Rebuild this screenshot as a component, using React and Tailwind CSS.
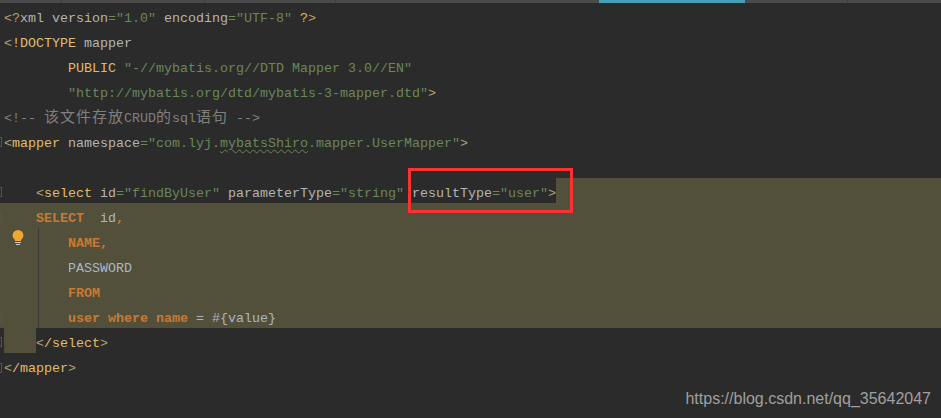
const mono = "font-['Liberation_Mono','Noto_Sans_CJK_SC',monospace]";

const tag = "text-[#e3bb68]";
const bracket = "text-[#b5a06f]";
const attr = "text-[#b4b4b4]";
const str = "text-[#6a8759]";
const kw = "font-bold text-[#cc7832]";
const sql = "text-[#a9b7c6]";
const comment = "text-[#808080]";

// [text, colour] pairs for each line of the editor
const T = (t, c) => ({ t, c });

function Line({ parts = [], lead = false, fill = false, lit = false, children }) {
  return (
    <div className={`flex h-[25px] pl-1 leading-[31px] whitespace-pre ${lit ? "bg-[#52503a]" : ""}`}>
      {lead ? <span className="bg-[#52503a]">{"    "}</span> : null}
      {parts.map((p, i) => (
        <span key={i} className={p.c}>{p.t}</span>
      ))}
      {children}
      {fill ? <span className="flex-1 bg-[#52503a]" /> : null}
    </div>
  );
}

function FoldMark({ className }) {
  return <span className={`absolute left-0 h-[10px] w-[2px] border-y border-r border-[#555] ${className}`} />;
}

export default function App() {
  return (
    <div className={`relative h-[418px] w-[941px] overflow-hidden bg-[#2b2b2b] text-[13.33px] ${mono}`}>
      <div className="flex h-[3px] bg-[#4a4a4a]">
        <div className="w-[62px] border-r border-[#3a3a3a]" />
        <div className="w-[143px] border-r border-[#3a3a3a]" />
        <div className="w-[131px] border-r border-[#3a3a3a]" />
        <div className="w-[263px]" />
        <div className="w-[146px] bg-[#4a9fb8]" />
        <div className="w-[103px] border-r border-[#3a3a3a]" />
        <div className="flex-1" />
      </div>

      <Line parts={[T("<?", bracket), T("xml ", attr), T("version", attr), T('="1.0" ', str), T("encoding", attr), T('="UTF-8" ', str), T("?", tag), T(">", bracket)]} />
      <Line parts={[T("<", bracket), T("!DOCTYPE ", tag), T("mapper", attr)]} />
      <Line parts={[T("        "), T("PUBLIC ", tag), T('"-//mybatis.org//DTD Mapper 3.0//EN"', str)]} />
      <Line parts={[T("        "), T('"http://mybatis.org/dtd/mybatis-3-mapper.dtd"', str), T(">", bracket)]} />
      <div className={`flex h-[25px] pl-1 leading-[31px] whitespace-pre ${comment}`}>
        <span>{"<!-- "}</span>
        <span className="w-[16px] text-[15px]">该</span>
        <span className="w-[16px] text-[15px]">文</span>
        <span className="w-[16px] text-[15px]">件</span>
        <span className="w-[16px] text-[15px]">存</span>
        <span className="w-[16px] text-[15px]">放</span>
        <span>CRUD</span>
        <span className="w-[16px] text-[15px]">的</span>
        <span>sql</span>
        <span className="w-[16px] text-[15px]">语</span>
        <span className="w-[16px] text-[15px]">句</span>
        <span>{" -->"}</span>
      </div>
      <Line>
        <span className={bracket}>{"<"}</span>
        <span className={tag}>mapper </span>
        <span className={attr}>namespace</span>
        <span className={str}>{'="com.lyj.'}</span>
        <span className={`${str} underline decoration-wavy decoration-[#6a8759] decoration-1 underline-offset-2`}>mybatsShiro</span>
        <span className={str}>{'.mapper.UserMapper"'}</span>
        <span className={bracket}>{">"}</span>
      </Line>
      <Line />
      <Line
        fill
        parts={[T("    "), T("<", bracket), T("select ", tag), T("id", attr), T('="findByUser" ', str), T("parameterType", attr), T('="string" ', str), T("resultType", attr), T('="user"', str), T(">", bracket)]}
      />
      <Line lit parts={[T("    "), T("SELECT", kw), T("  "), T("id", sql), T(",", kw)]} />
      <Line lit parts={[T("        "), T("NAME", kw), T(",", kw)]} />
      <Line lit parts={[T("        "), T("PASSWORD", sql)]} />
      <Line lit parts={[T("        "), T("FROM", kw)]} />
      <Line lit parts={[T("        "), T("user where name", kw), T(" = #{value}", sql)]} />
      <Line lead parts={[T("<", bracket), T("/select", tag), T(">", bracket)]} />
      <Line parts={[T("<", bracket), T("/mapper", tag), T(">", bracket)]} />

      <FoldMark className="top-[137px]" />
      <FoldMark className="top-[187px]" />
      <FoldMark className="top-[212px]" />
      <FoldMark className="top-[313px]" />
      <FoldMark className="top-[337px]" />
      <FoldMark className="top-[363px]" />

      {/* indent guide */}
      <div className="absolute top-[228px] left-[38px] h-[100px] w-px bg-[#3a3a36]" />

      {/* intention bulb */}
      <svg className="absolute top-[230px] left-[12px]" width="12" height="16" viewBox="0 0 12 16">
        <path d="M6 0a5.4 5.4 0 0 1 5.4 5.4c0 2-1.2 3-2 4.1-.3.5-.4 1-.4 1.5H3c0-.5-.1-1-.4-1.5-.8-1.1-2-2.1-2-4.1A5.4 5.4 0 0 1 6 0z" fill="#f0a732" />
        <rect x="3" y="12" width="6" height="1" fill="#c9c9c9" />
        <rect x="4" y="14" width="4" height="1" fill="#c9c9c9" />
      </svg>

      {/* red annotation box */}
      <div className="absolute top-[168px] left-[408px] h-[45px] w-[165px] border-[3px] border-[#fc3232]" />

      {/* watermark */}
      <div className="absolute top-[390px] right-[10px] font-['Liberation_Sans',sans-serif] text-[16px] leading-[18px] text-[#a0a0a0]">
        https://blog.csdn.net/qq_35642047
      </div>
    </div>
  );
}
